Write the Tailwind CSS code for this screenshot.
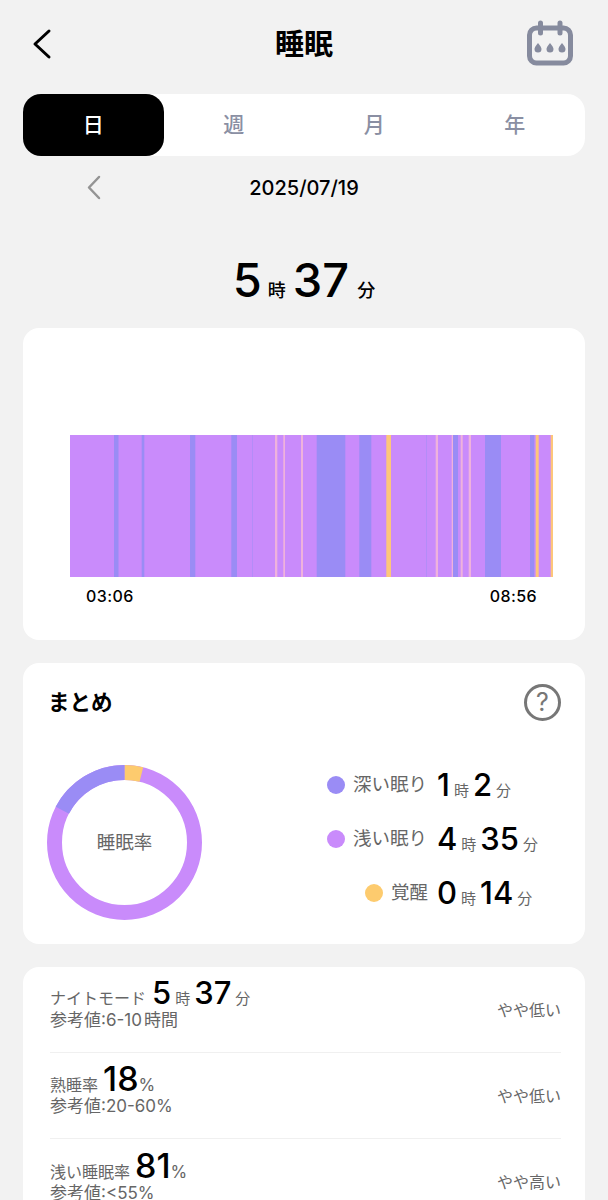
<!DOCTYPE html>
<html lang="ja">
<head>
    <meta charset="UTF-8">
    <title>睡眠</title>
    <script src="https://cdn.jsdelivr.net/npm/@tailwindcss/browser@4"></script>
</head>
<body class="bg-[#f2f2f2] font-['Inter','Noto_Sans_CJK_JP',sans-serif] text-black">
<div class="h-[1200px] overflow-hidden px-[23px]">

    <!-- header -->
    <div class="relative flex h-[94px] items-center justify-center pb-[6px]">
        <svg class="absolute left-[9px] top-[28px]" width="20" height="32" viewBox="0 0 20 32" fill="none" stroke="#000" stroke-width="3" stroke-linecap="round" stroke-linejoin="round"><path d="M17 3 L3 16 L17 29"/></svg>
        <h1 class="text-[29px] leading-none font-bold">睡眠</h1>
        <svg class="absolute left-[502px] top-[20px]" width="48" height="46" viewBox="0 0 48 46" fill="none"><rect x="4.500" y="8" width="41" height="35" rx="7" stroke="#868b9e" stroke-width="5"/><path d="M15.500 3 V13 M35 3 V13" stroke="#868b9e" stroke-width="5" stroke-linecap="round"/><path d="M13 23 q-3.500 4 -3.500 6 a3.500 3.500 0 0 0 7 0 q0 -2 -3.500 -6 Z M25 23 q-3.500 4 -3.500 6 a3.500 3.500 0 0 0 7 0 q0 -2 -3.500 -6 Z M37 23 q-3.500 4 -3.500 6 a3.500 3.500 0 0 0 7 0 q0 -2 -3.500 -6 Z" fill="#868b9e"/></svg>
    </div>

    <!-- tabs -->
    <div class="grid h-[62px] grid-cols-4 rounded-[18px] bg-white text-[21px] font-medium text-[#8a8fa3]">
        <div class="flex items-center justify-center rounded-[18px] bg-black text-white">日</div>
        <div class="flex items-center justify-center">週</div>
        <div class="flex items-center justify-center">月</div>
        <div class="flex items-center justify-center">年</div>
    </div>

    <!-- date -->
    <div class="relative flex h-[64px] items-center justify-center">
        <svg class="absolute left-[63px] top-[19px]" width="16" height="25" viewBox="0 0 16 25" fill="none" stroke="#949494" stroke-width="2.500" stroke-linecap="round" stroke-linejoin="round"><path d="M13 2 L3 12.500 L13 23"/></svg>
        <span class="text-[20px] font-medium">2025/07/19</span>
    </div>

    <!-- total -->
    <div class="flex h-[108px] items-baseline justify-center pt-[37px] font-medium">
        <span class="text-[47px] leading-[46px]">5</span><span class="mr-[7px] ml-[6px] text-[18px]">時</span><span class="text-[47px] leading-[46px]">37</span><span class="ml-[8px] text-[18px]">分</span>
    </div>

    <!-- chart -->
    <div class="h-[312px] rounded-[16px] bg-white pt-[107px]">
        <svg class="ml-[47px] block" width="483" height="142" viewBox="70 0 483 142">
            <rect x="70" y="0" width="483" height="142" fill="#c98bfb"/>
            <g fill="#9a8cf5">
                <rect x="114" y="0" width="4.500" height="142"/>
                <rect x="141.700" y="0" width="2.600" height="142"/>
                <rect x="190" y="0" width="5.300" height="142"/>
                <rect x="231.300" y="0" width="5.700" height="142"/>
                <rect x="316.700" y="0" width="28.600" height="142"/>
                <rect x="359.300" y="0" width="12" height="142"/>
                <rect x="453" y="0" width="5" height="142"/>
                <rect x="485" y="0" width="16" height="142"/>
                <rect x="530" y="0" width="4.300" height="142"/>
            </g>
            <g fill="#b48cf8">
                <rect x="252" y="0" width="1" height="142"/>
                <rect x="426" y="0" width="1" height="142"/>
            </g>
            <g fill="#efb2dc">
                <rect x="275" y="0" width="2.300" height="142"/>
                <rect x="283.300" y="0" width="1.700" height="142"/>
                <rect x="301" y="0" width="2" height="142"/>
                <rect x="435.700" y="0" width="2.300" height="142"/>
                <rect x="451.700" y="0" width="1.300" height="142"/>
                <rect x="460.700" y="0" width="2" height="142"/>
                <rect x="468.700" y="0" width="2.300" height="142"/>
            </g>
            <g fill="#fdc67a">
                <rect x="386.300" y="0" width="4.700" height="142"/>
                <rect x="535.700" y="0" width="3" height="142"/>
                <rect x="550.700" y="0" width="2.300" height="142"/>
            </g>
        </svg>
        <div class="mt-[9px] flex justify-between pr-[48px] pl-[63px] text-[16px] leading-[20px] font-medium tracking-[0.4px]">
            <span>03:06</span>
            <span>08:56</span>
        </div>
    </div>

    <!-- summary -->
    <div class="relative mt-[23px] h-[281px] rounded-[16px] bg-white">
        <div class="flex items-center justify-between pt-[21px] pr-[24px] pl-[25px]">
            <h2 class="text-[21.500px] leading-[37px] font-bold">まとめ</h2>
            <div class="flex h-[37px] w-[37px] items-center justify-center rounded-full border-[3px] border-[#777] text-[25px] leading-none text-[#777]">?</div>
        </div>
        <div class="flex pt-[44px] pl-[24px]">
            <div class="relative h-[155px] w-[155px]">
                <svg class="block -rotate-90" width="155" height="155" viewBox="0 0 155 155" fill="none" stroke-width="15">
                    <circle cx="77.500" cy="77.500" r="70" stroke="#c98bfb"/>
                    <circle cx="77.500" cy="77.500" r="70" stroke="#fdcb6e" stroke-dasharray="17.100 422.700"/>
                    <circle cx="77.500" cy="77.500" r="70" stroke="#9a8cf5" stroke-dasharray="77 362.800" stroke-dashoffset="77"/>
                </svg>
                <div class="absolute inset-0 flex items-center justify-center text-[18.500px] text-[#666]">睡眠率</div>
            </div>
            <div class="-mt-[7px] ml-[125px] flex flex-col">
                <div class="flex h-[54px] items-center">
                    <span class="h-[18px] w-[18px] rounded-full bg-[#9a8cf5]"></span>
                    <span class="ml-[8px] w-[84px] text-[18.500px] text-[#666]">深い眠り</span>
                    <span class="flex items-baseline font-medium"><span class="text-[31px]">1</span><span class="mx-[4px] text-[15px] font-normal text-[#666]">時</span><span class="text-[31px]">2</span><span class="ml-[4px] text-[15px] font-normal text-[#666]">分</span></span>
                </div>
                <div class="flex h-[54px] items-center">
                    <span class="h-[18px] w-[18px] rounded-full bg-[#c98bfb]"></span>
                    <span class="ml-[8px] w-[84px] text-[18.500px] text-[#666]">浅い眠り</span>
                    <span class="flex items-baseline font-medium"><span class="text-[31px]">4</span><span class="mx-[4px] text-[15px] font-normal text-[#666]">時</span><span class="text-[31px]">35</span><span class="ml-[4px] text-[15px] font-normal text-[#666]">分</span></span>
                </div>
                <div class="flex h-[54px] items-center pl-[38px]">
                    <span class="h-[18px] w-[18px] rounded-full bg-[#fdcb6e]"></span>
                    <span class="ml-[8px] w-[46px] text-[18.500px] text-[#666]">覚醒</span>
                    <span class="flex items-baseline font-medium"><span class="text-[31px]">0</span><span class="mx-[4px] text-[15px] font-normal text-[#666]">時</span><span class="text-[31px]">14</span><span class="ml-[4px] text-[15px] font-normal text-[#666]">分</span></span>
                </div>
            </div>
        </div>
    </div>

    <!-- metrics -->
    <div class="mt-[23px] rounded-[16px] bg-white pr-[24px] pl-[27px]">
        <div class="flex h-[86px] items-center justify-between border-b border-[#f0f0f0]">
            <div class="mb-[8px]">
                <div class="flex h-[29px] items-baseline text-[16px] text-[#666]">ナイトモード<span class="ml-[6px] text-[31px] leading-[30px] font-medium text-black">5</span><span class="mx-[4px] text-[15px]">時</span><span class="text-[31px] leading-[30px] font-medium text-black">37</span><span class="ml-[4px] text-[15px]">分</span></div>
                <div class="text-[17px] leading-[26px] text-[#666]">参考値:6-10<span class="ml-[2px]">時間</span></div>
            </div>
            <span class="text-[16px] text-[#666]">やや低い</span>
        </div>
        <div class="flex h-[86px] items-center justify-between border-b border-[#f0f0f0]">
            <div class="mb-[8px]">
                <div class="flex h-[29px] items-baseline text-[16px] text-[#666]">熟睡率<span class="ml-[5px] text-[34px] leading-[30px] font-medium text-black">18</span><span class="text-[17px]">%</span></div>
                <div class="text-[17px] leading-[26px] text-[#666]">参考値:20-60%</div>
            </div>
            <span class="text-[16px] text-[#666]">やや低い</span>
        </div>
        <div class="flex h-[86px] items-center justify-between">
            <div class="mb-[8px]">
                <div class="flex h-[29px] items-baseline text-[16px] text-[#666]">浅い睡眠率<span class="ml-[5px] text-[34px] leading-[30px] font-medium text-black">81</span><span class="text-[17px]">%</span></div>
                <div class="text-[17px] leading-[26px] text-[#666]">参考値:&lt;55%</div>
            </div>
            <span class="text-[16px] text-[#666]">やや高い</span>
        </div>
    </div>
</div>
</body>
</html>
